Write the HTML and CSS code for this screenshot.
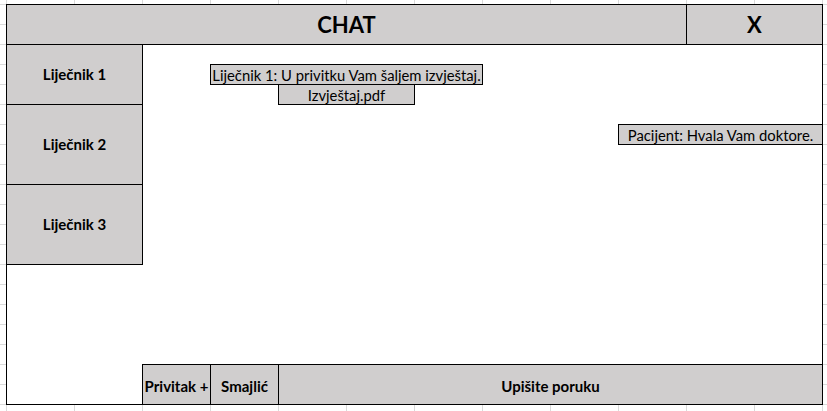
FILE: index.html
```html
<!DOCTYPE html>
<html lang="hr">
<head>
<meta charset="utf-8">
<title>Chat</title>
<link rel="stylesheet" href="styles.css">
</head>
<body>
<div class="sheet">
  <div class="cell cell--title">CHAT</div>
  <div class="cell cell--close cell--edge-right">X</div>

  <div class="cell cell--contact cell--c1">Liječnik 1</div>
  <div class="cell cell--contact cell--c2">Liječnik 2</div>
  <div class="cell cell--contact cell--c3">Liječnik 3</div>

  <div class="box msg msg--doctor">Liječnik 1: U privitku Vam šaljem izvještaj.</div>
  <div class="box msg msg--file">Izvještaj.pdf</div>
  <div class="box msg msg--patient cell--edge-right">Pacijent: Hvala Vam doktore.</div>

  <div class="box action action--attach cell--edge-bottom">Privitak +</div>
  <div class="box action action--emoji cell--edge-bottom">Smajlić</div>
  <div class="box action action--input cell--edge-bottom cell--edge-right">Upišite poruku</div>
</div>
</body>
</html>
```

FILE: styles.css
```css
html, body {
  margin: 0;
  padding: 0;
}

body {
  width: 827px;
  height: 411px;
  overflow: hidden;
  font-family: Lato, "Open Sans", "Liberation Sans", sans-serif;
  color: #000;
  background-color: #fff;
  background-image:
    linear-gradient(to right, #dadada 0, #dadada 1px, transparent 1px),
    linear-gradient(to bottom, #dadada 0, #dadada 1px, transparent 1px);
  background-size: 68px 100%, 100% 20px;
  background-position: 6px 0, 0 4px;
  padding: 4px 0 0 6px;
  box-sizing: border-box;
}

.sheet {
  display: grid;
  grid-template-columns: repeat(11, 68px) 67px;
  grid-template-rows: repeat(19, 20px) 19px;
  border: 1px solid #000;
  background: #fff;
  width: max-content;
}

.cell,
.box {
  box-sizing: border-box;
  background: #d0cece;
  display: flex;
  align-items: center;
  justify-content: center;
  white-space: nowrap;
  line-height: 1;
}

.cell {
  border-right: 1px solid #000;
  border-bottom: 1px solid #000;
}

.box {
  border: 1px solid #000;
  margin: -1px 0 0 -1px;
}

.cell--edge-right {
  border-right: 0;
}

.cell--edge-bottom {
  border-bottom: 0;
}

.cell--title {
  grid-column: 1 / 11;
  grid-row: 1 / 3;
  font-size: 22px;
  font-weight: 700;
}

.cell--close {
  grid-column: 11 / 13;
  grid-row: 1 / 3;
  font-size: 22px;
  font-weight: 700;
}

.cell--contact {
  grid-column: 1 / 3;
  font-size: 15px;
  font-weight: 700;
}

.cell--c1 { grid-row: 3 / 6; }
.cell--c2 { grid-row: 6 / 10; }
.cell--c3 { grid-row: 10 / 14; }

.msg {
  font-size: 14.8px;
  padding-top: 1px;
}

.msg--doctor {
  grid-column: 4 / 8;
  grid-row: 4;
}

.msg--file {
  grid-column: 5 / 7;
  grid-row: 5;
}

.msg--patient {
  grid-column: 10 / 13;
  grid-row: 7;
}

.action {
  grid-row: 19 / 21;
  font-size: 15px;
  font-weight: 700;
  padding-top: 4px;
}

.action--attach { grid-column: 3 / 4; }
.action--emoji { grid-column: 4 / 5; }
.action--input { grid-column: 5 / 13; }
```
